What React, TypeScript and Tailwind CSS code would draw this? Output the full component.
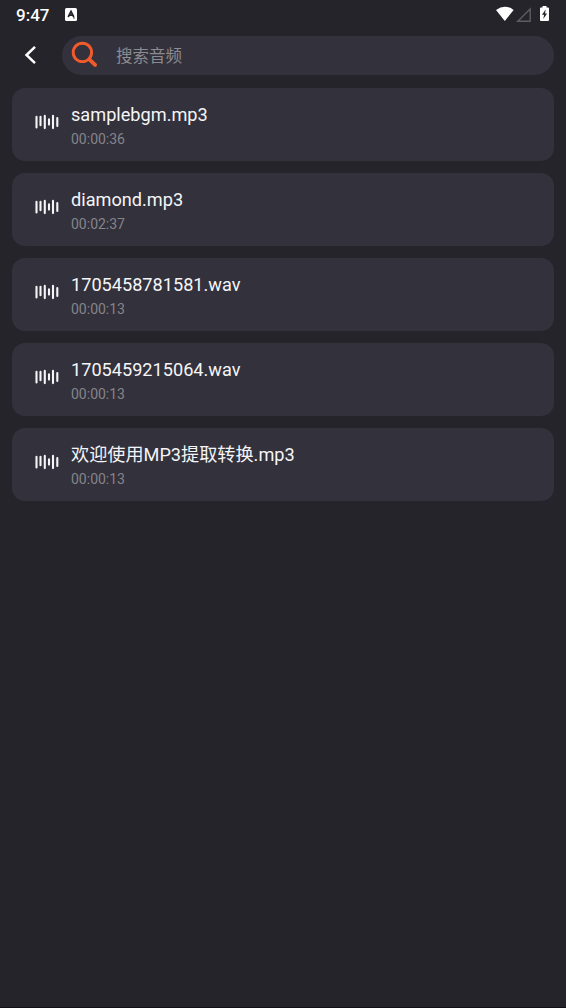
const tracks = [
  { name: "samplebgm.mp3", time: "00:00:36" },
  { name: "diamond.mp3", time: "00:02:37" },
  { name: "1705458781581.wav", time: "00:00:13" },
  { name: "1705459215064.wav", time: "00:00:13" },
  { name: "欢迎使用MP3提取转换.mp3", time: "00:00:13" },
];

function StatusBar() {
  return (
    <div className="flex h-[29px] items-center pl-4 pr-4">
      <span className="w-[49px] pt-px text-[17px] leading-[28px] font-medium text-white">9:47</span>
      <svg width="12" height="13" viewBox="0 0 12 13" aria-hidden="true">
        <rect width="12" height="13" rx="1.5" fill="#fff" />
        <path d="M3.2 9 6 3.4 8.8 9M4.3 7.2h3.4M8.5 10h1" fill="none" stroke="#25242a" strokeWidth="1.7" />
      </svg>
      <svg className="mb-[2px] ml-auto" width="54" height="18" viewBox="0 0 54 18" aria-hidden="true">
        <path d="M0 5Q9 -1.6 17.6 5L8.8 16Z" fill="#fff" />
        <path d="M34.2 4v12.200H21.800Z" fill="none" stroke="#5d5c61" strokeWidth="1.4" />
        <path d="M46.500 1h4v1.400H52q1 0 1 1V15q0 1-1 1h-7q-1 0-1-1V3.400q0-1 1-1h1.500Z" fill="#fff" />
        <path d="M49.800 4.200 46 9.800h2.100L47.300 14l3.800-5.400H49Z" fill="#25242a" />
      </svg>
    </div>
  );
}

function WaveIcon() {
  return (
    <svg width="24" height="16" viewBox="0 0 24 16" fill="none" stroke="#f5f5f7" strokeWidth="2.100" strokeLinecap="round" aria-hidden="true">
      <path d="M1.500 2.800v10.600M5.500 2.800v8.400M9.800 1.900v12.200M14 5.400v5.200M18 1.900v12.200M22.300 4v8" />
    </svg>
  );
}

export default function App() {
  return (
    <div className="flex h-[1008px] w-full flex-col overflow-hidden border-b border-[#120f16] bg-[#25242a] font-[Roboto,'Noto_Sans_CJK_SC',sans-serif]">
      <StatusBar />
      <header className="flex items-center pt-[7px] pr-3 pl-6">
        <button aria-label="返回" className="mr-[25px] mb-[2px]">
          <svg width="13" height="20" viewBox="0 0 13 20" fill="none" stroke="#fff" strokeWidth="2.500" aria-hidden="true">
            <path d="M11 1.800 2.500 10l8.500 8.200" />
          </svg>
        </button>
        <div className="flex h-[39px] flex-1 items-center rounded-full bg-[#33313c] pl-[9px]">
          <svg className="mb-[2px]" width="28" height="28" viewBox="0 0 28 28" fill="none" stroke="#f15a2b" aria-hidden="true">
            <circle cx="11.400" cy="11.400" r="9.200" strokeWidth="2.900" />
            <path d="m18.300 18.300 5.800 5.600" strokeWidth="3.900" strokeLinecap="round" />
          </svg>
          <span className="ml-[17px] pt-[3px] text-[16.5px] text-[#8b8a90]">搜索音频</span>
        </div>
      </header>
      <main className="flex flex-col gap-3 px-3 pt-[13px]">
        {tracks.map((track) => (
          <article key={track.name} className="flex h-[73px] items-start rounded-[13px] bg-[#33313c] pl-[23px]">
            <div className="mt-[26px]"><WaveIcon /></div>
            <div className="ml-3 pt-[15px]">
              <h2 className="text-[18.150px] leading-6 whitespace-nowrap text-[#f5f5f7]">{track.name}</h2>
              <p className="mt-[3px] text-[14px] leading-[18px] text-[#85848a]">{track.time}</p>
            </div>
          </article>
        ))}
      </main>
    </div>
  );
}
